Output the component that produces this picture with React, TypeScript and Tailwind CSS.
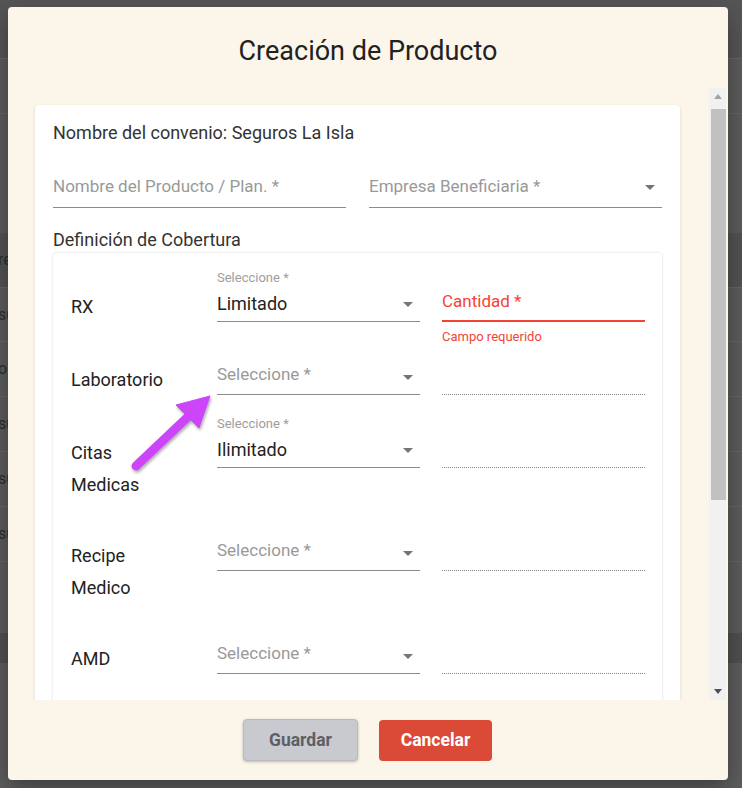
import React from 'react';

function Caret({ color = 'fill-[#757575]' }: { color?: string }) {
  return (
    <svg viewBox="0 0 24 24" className={`w-6 h-6 shrink-0 ${color}`}>
      <path d="M7 10l5 5 5-5z" />
    </svg>
  );
}

function SelectField({ value }: { value?: string }) {
  return (
    <div className="w-[203px] flex flex-col">
      <div className="h-4 text-[13px] leading-4 text-[#9e9e9e]">{value ? 'Seleccione *' : ''}</div>
      <div className="h-9 flex items-center justify-between border-b border-[#8c8c8c]">
        {value ? (
          <span className="text-[18px] text-[#222]">{value}</span>
        ) : (
          <span className="text-[17px] text-[#999] -mt-[3px]">Seleccione *</span>
        )}
        <Caret />
      </div>
    </div>
  );
}

function DisabledInput() {
  return <div className="w-[203px] h-[52px] border-b border-dotted border-[#858585]" />;
}

function CoverageRow({
  label,
  height,
  value,
  first,
}: {
  label: string[];
  height: string;
  value?: string;
  first?: boolean;
}) {
  return (
    <div className={`flex items-start ${height}`}>
      <div className="w-[146px] mt-[21px] text-[18px] leading-8 text-[#222]">
        {label.map((l) => (
          <div key={l}>{l}</div>
        ))}
      </div>
      <SelectField value={value} />
      <div className="ml-[22px]">
        {first ? (
          <div className="w-[203px] flex flex-col">
            <div className="h-4" />
            <div className="h-9 flex items-center border-b-2 border-[#f44336]">
              <span className="text-[17px] text-[#f44336] -mt-[3px]">Cantidad *</span>
            </div>
            <div className="mt-[7px] text-[13px] leading-4 text-[#f44336]">Campo requerido</div>
          </div>
        ) : (
          <DisabledInput />
        )}
      </div>
    </div>
  );
}

function BackdropRow({ text, cls }: { text?: string; cls: string }) {
  return (
    <div className={`flex items-center border-b border-[#666] text-[16px] text-[#2e2e2e] ${cls}`}>
      <span className="-ml-[2px]">{text}</span>
    </div>
  );
}

export default function App() {
  return (
    <div className="relative w-[742px] h-[788px] overflow-hidden bg-[#5d5d5d] font-['Roboto','Noto_Sans',sans-serif]">
      {/* page behind the overlay */}
      <div className="flex flex-col">
        <div className="h-[59px] bg-[#565656] border-b border-[#666]" />
        <div className="h-[55px] bg-[#5c5c5c] border-b border-[#666]" />
        <div className="h-[119px] bg-[#5c5c5c]" />
        <BackdropRow text="re" cls="h-[55px] bg-[#535353]" />
        <BackdropRow text="su" cls="h-[54px] bg-[#5c5c5c]" />
        <BackdropRow text="o" cls="h-[55px] bg-[#5c5c5c]" />
        <BackdropRow text="su" cls="h-[55px] bg-[#5c5c5c]" />
        <BackdropRow text="su" cls="h-[55px] bg-[#5c5c5c]" />
        <BackdropRow text="su" cls="h-[55px] bg-[#5c5c5c]" />
        <div className="h-[71px] bg-[#5c5c5c]" />
        <div className="h-[30px] bg-[#505050]" />
      </div>

      {/* dialog */}
      <div className="absolute left-[8px] top-[7px] w-[720px] h-[773px] rounded-[4px] bg-[#fcf5ea] shadow-[0_8px_24px_rgba(0,0,0,0.35)] flex flex-col">
        <h1 className="pt-7 h-[81px] text-center text-[27px] leading-8 text-[#212121]">Creación de Producto</h1>

        <div className="flex h-[612px] pl-[21px] pr-[2px]">
          <div className="w-[680px] overflow-hidden pl-[6px] pt-[17px]">
            <div className="w-[645px] rounded-[4px] bg-white shadow-[0_1px_3px_rgba(0,0,0,0.14)] px-[18px] pt-4 pb-6">
              <p className="text-[18px] leading-6 text-[#333]">Nombre del convenio: Seguros La Isla</p>

              <div className="mt-[22px] flex gap-[23px]">
                <div className="w-[293px] h-[41px] flex items-center border-b border-[#8c8c8c] text-[17px] text-[#999]">
                  Nombre del Producto / Plan. *
                </div>
                <div className="w-[293px] h-[41px] flex items-center justify-between border-b border-[#8c8c8c] text-[17px] text-[#999]">
                  <span>Empresa Beneficiaria *</span>
                  <Caret />
                </div>
              </div>

              <p className="mt-5 text-[18px] leading-6 text-[#333]">Definición de Cobertura</p>

              <div className="mt-px rounded-[4px] bg-white shadow-[0_0_3px_rgba(0,0,0,0.16)] pl-[18px] pr-[17px] pt-[17px] pb-6">
                <CoverageRow label={['RX']} value="Limitado" height="h-[73px]" first />
                <CoverageRow label={['Laboratorio']} height="h-[73px]" />
                <CoverageRow label={['Citas', 'Medicas']} value="Ilimitado" height="h-[103px]" />
                <CoverageRow label={['Recipe', 'Medico']} height="h-[103px]" />
                <CoverageRow label={['AMD']} height="h-[103px]" />
              </div>
            </div>
          </div>

          {/* scrollbar */}
          <div className="w-[17px] bg-[#f1f1f1] flex flex-col items-center">
            <div className="h-[17px] flex items-center justify-center">
              <svg viewBox="0 0 8 5" className="w-2 h-[5px] fill-[#a3a3a3]">
                <path d="M0 5L4 0L8 5z" />
              </svg>
            </div>
            <div className="mt-1 w-[15px] ml-[2px] h-[391px] bg-[#c1c1c1]" />
            <div className="flex-1" />
            <div className="h-[17px] flex items-center justify-center">
              <svg viewBox="0 0 8 5" className="w-2 h-[5px] fill-[#505050]">
                <path d="M0 0L8 0L4 5z" />
              </svg>
            </div>
          </div>
        </div>

        <div className="pt-[19px] flex justify-center gap-[21px]">
          <button className="w-[115px] h-[42px] -ml-px rounded-[4px] border border-[#b9bac0] bg-[#c9cad0] shadow-[0_1px_3px_rgba(0,0,0,0.25)] text-[17.5px] font-bold text-[#5e5f64]">
            Guardar
          </button>
          <button className="w-[113px] h-[41px] mt-px rounded-[4px] bg-[#da4a37] text-[17.5px] font-bold text-white">
            Cancelar
          </button>
        </div>
      </div>

      {/* annotation arrow */}
      <svg className="absolute inset-0 w-[742px] h-[788px] pointer-events-none" viewBox="0 0 742 788">
        <defs>
          <filter id="arrowShadow" x="-20%" y="-20%" width="140%" height="140%">
            <feDropShadow dx="1" dy="2" stdDeviation="1.5" floodColor="#000" floodOpacity="0.35" />
          </filter>
        </defs>
        <g filter="url(#arrowShadow)" fill="#cd45f8" stroke="#cd45f8">
          <line x1="136" y1="466" x2="192" y2="413" strokeWidth="9" strokeLinecap="round" />
          <polygon points="210,396 176,405 199,428" strokeWidth="1" strokeLinejoin="round" />
        </g>
      </svg>
    </div>
  );
}
